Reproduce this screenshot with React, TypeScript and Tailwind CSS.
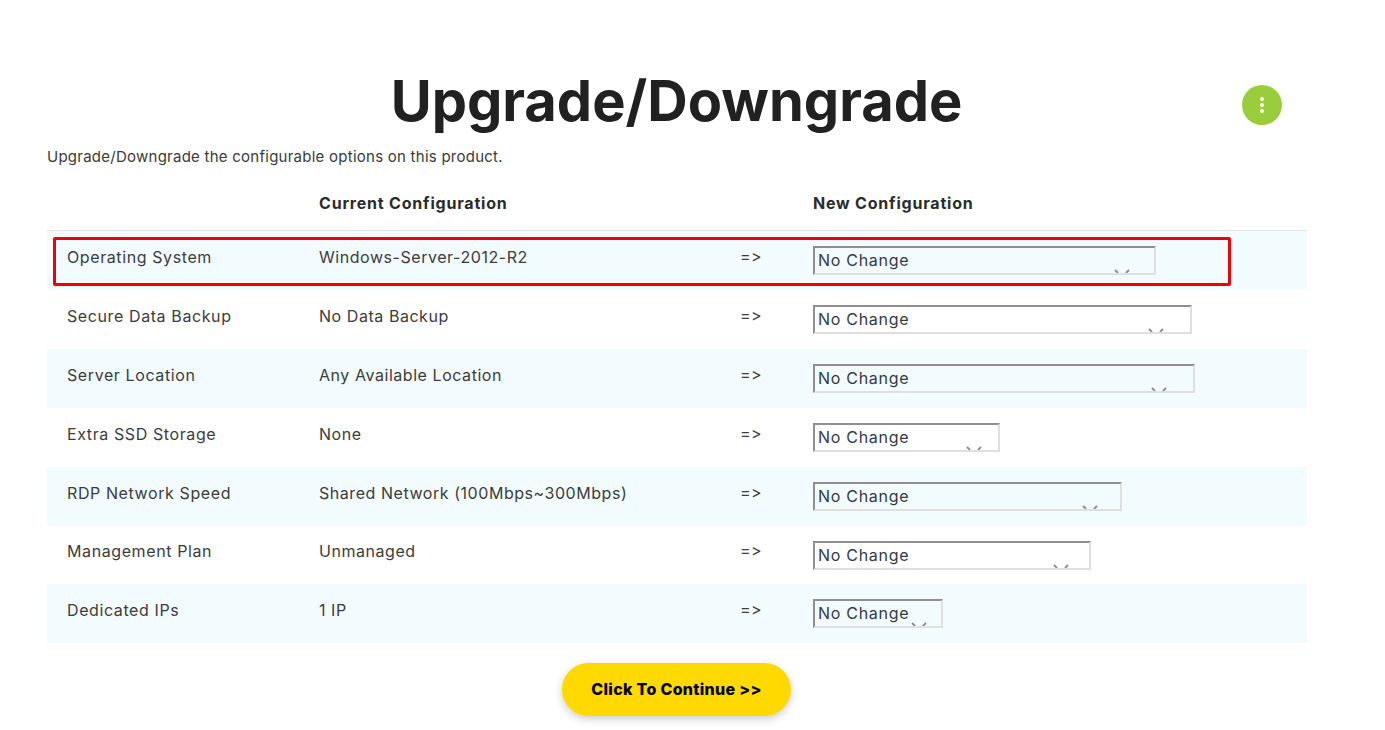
import React from 'react';

const rows = [
  { label: 'Operating System', current: 'Windows-Server-2012-R2', width: 'w-[343px]', h: 'h-[59px]', tint: true, chev: 'right-[24px]' },
  { label: 'Secure Data Backup', current: 'No Data Backup', width: 'w-[379px]', h: 'h-[59px]', tint: false, chev: 'right-[26px]' },
  { label: 'Server Location', current: 'Any Available Location', width: 'w-[382px]', h: 'h-[59px]', tint: true, chev: 'right-[26px]' },
  { label: 'Extra SSD Storage', current: 'None', width: 'w-[187px]', h: 'h-[59px]', tint: false, chev: 'right-[16px]' },
  { label: 'RDP Network Speed', current: 'Shared Network (100Mbps~300Mbps)', width: 'w-[309px]', h: 'h-[59px]', tint: true, chev: 'right-[22px]' },
  { label: 'Management Plan', current: 'Unmanaged', width: 'w-[278px]', h: 'h-[58px]', tint: false, chev: 'right-[20px]' },
  { label: 'Dedicated IPs', current: '1 IP', width: 'w-[130px]', h: 'h-[59px]', tint: true, chev: 'right-[14px]' },
];

const FakeSelect = ({ width, chev }: { width: string; chev: string }) => (
  <div className={`relative h-[29px] ${width} overflow-hidden border-2 border-t-[#8f8f8f] border-l-[#8f8f8f] border-r-[#dfdfdf] border-b-[#dfdfdf] pl-[3px] text-[16px] leading-[24px] tracking-[0.7px] text-[#333a45]`}>
    No Change
    <svg className={`absolute bottom-[-2px] h-[6px] w-[16px] ${chev}`} viewBox="0 0 16 6" fill="none" stroke="#8a8a8a" strokeWidth="1.8">
      <path d="M1 1l3 3M15 1l-3 3" />
    </svg>
  </div>
);

export default function App() {
  return (
    <div className="relative h-[730px] w-[1385px] overflow-hidden bg-white font-['Inter',sans-serif] text-[#2d2d2d]">
      <div className="mx-[47px] w-[1260px] pt-[63px]">
        <div className="relative flex h-[76px] items-center justify-center pr-[1px]">
          <h1 className="text-[56px] leading-[76px] font-bold text-[#212121]">Upgrade/Downgrade</h1>
          <div className="absolute top-[22px] left-[1195px] flex h-10 w-10 items-center justify-center rounded-full bg-[#9acd3c]">
            <span className="flex flex-col gap-[2px]">
              <span className="h-1 w-1 rounded-full bg-white" />
              <span className="h-1 w-1 rounded-full bg-white" />
              <span className="h-1 w-1 rounded-full bg-white" />
            </span>
          </div>
        </div>
        <p className="mt-[7px] text-[15px] leading-[22px] tracking-[0.25px] text-[#3a3a3a]">Upgrade/Downgrade the configurable options on this product.</p>
        <div className="mt-[14px] flex h-[49px] items-center border-b border-[#e2e5e8] pb-[6px] text-[16px] font-bold tracking-[0.8px] text-[#2b2b2b]">
          <div className="w-[272px]" />
          <div className="w-[494px]">Current Configuration</div>
          <div>New Configuration</div>
        </div>
        <div>
          {rows.map((r) => (
            <div key={r.label} className={`flex items-center text-[16px] tracking-[0.55px] text-[#3c3c3c] ${r.h} ${r.tint ? 'bg-[#f2fbfe]' : 'bg-white'}`}>
              <div className="w-[272px] pb-[8px] pl-[20px] tracking-[0.6px]">{r.label}</div>
              <div className="w-[421px] pb-[8px]">{r.current}</div>
              <div className="w-[73px] pb-[10px] tracking-[0.5px]">=&gt;</div>
              <FakeSelect width={r.width} chev={r.chev} />
            </div>
          ))}
        </div>
        <div className="mt-[20px] flex justify-center pr-[1px]">
          <button className="h-[53px] w-[229px] rounded-full bg-[#ffd900] pb-[2px] text-[16px] font-extrabold tracking-[0.3px] text-black shadow-[0_3px_8px_rgba(0,0,0,0.2)]">
            Click To Continue &gt;&gt;
          </button>
        </div>
      </div>
      <div className="absolute top-[237px] left-[53px] h-[49px] w-[1178px] rounded-[2px] border-[3px] border-[#f00000]" />
    </div>
  );
}
